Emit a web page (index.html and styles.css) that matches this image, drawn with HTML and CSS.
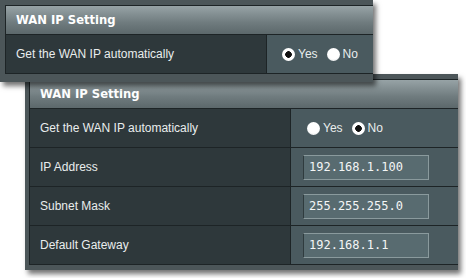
FILE: index.html
```html
<!DOCTYPE html>
<html>
<head>
<meta charset="utf-8">
<link rel="stylesheet" href="styles.css">
</head>
<body>
<div class="stage">
  <div class="panel panel-front">
    <div class="grid">
      <div class="head">WAN IP Setting</div>
      <div class="row">
        <div class="label">Get the WAN IP automatically</div>
        <div class="value">
          <span class="opt"><span class="radio checked"></span>Yes</span>
          <span class="opt"><span class="radio"></span>No</span>
        </div>
      </div>
    </div>
  </div>
  <div class="panel panel-back">
    <div class="grid">
      <div class="head">WAN IP Setting</div>
      <div class="row">
        <div class="label">Get the WAN IP automatically</div>
        <div class="value">
          <span class="opt"><span class="radio"></span>Yes</span>
          <span class="opt"><span class="radio checked"></span>No</span>
        </div>
      </div>
      <div class="row">
        <div class="label">IP Address</div>
        <div class="value"><span class="field">192.168.1.100</span></div>
      </div>
      <div class="row">
        <div class="label">Subnet Mask</div>
        <div class="value"><span class="field">255.255.255.0</span></div>
      </div>
      <div class="row">
        <div class="label">Default Gateway</div>
        <div class="value"><span class="field">192.168.1.1</span></div>
      </div>
    </div>
  </div>
</div>
</body>
</html>
```

FILE: styles.css
```css
html, body {
  margin: 0;
  padding: 0;
  background: #ffffff;
}
.stage {
  display: flex;
  flex-direction: column;
  width: 466px;
  height: 278px;
  overflow: hidden;
}
.panel {
  background: #4c5659;
  box-shadow: 3px 4px 5px rgba(0, 0, 0, 0.55);
  font-family: "Liberation Sans", Arial, sans-serif;
  font-size: 12px;
  color: #e9eded;
}
.panel-front {
  width: 368px;
  padding: 5px 0 8px 5px;
  position: relative;
  z-index: 2;
}
.panel-back {
  width: 429px;
  margin-left: 25px;
  margin-top: -8px;
  padding: 5px 0 5px 4px;
}
.grid {
  border-top: 1px solid #1d2426;
  border-left: 1px solid #1d2426;
}
.head {
  height: 28px;
  line-height: 28px;
  padding-left: 10px;
  border-bottom: 1px solid #1d2426;
  background: linear-gradient(#97a3a6, #6f7b7e 60%, #5c686b);
  font-family: "DejaVu Sans", Verdana, sans-serif;
  font-weight: bold;
  font-size: 11.6px;
  color: #ffffff;
}
.row {
  display: flex;
  height: 38px;
  border-bottom: 1px solid #1d2426;
}
.label {
  width: 250px;
  padding-left: 10px;
  display: flex;
  align-items: center;
  background: #2e383b;
  border-right: 1px solid #1d2426;
}
.value {
  flex: 1;
  display: flex;
  align-items: center;
  gap: 9px;
  padding-left: 15px;
  background: #4a5a5f;
}
.panel-back .value {
  padding-left: 12px;
}
.panel-back .value .opt:first-child {
  margin-left: 4px;
}
.opt {
  display: flex;
  align-items: center;
  gap: 3px;
}
.radio {
  width: 13px;
  height: 13px;
  border-radius: 50%;
  background: radial-gradient(circle at 50% 40%, #ffffff 55%, #d8dcdc 100%);
  box-sizing: border-box;
}
.radio.checked {
  background: radial-gradient(circle, #111 0 3px, #ffffff 3.6px);
}
.field {
  box-sizing: border-box;
  width: 126px;
  height: 25px;
  display: flex;
  align-items: center;
  padding-left: 5px;
  background: #586b70;
  border: 1px solid #8a9a9d;
  border-left-color: #2f3b3e;
  font-family: "DejaVu Sans Mono", monospace;
  font-size: 12px;
  color: #f4f6f6;
}
```
